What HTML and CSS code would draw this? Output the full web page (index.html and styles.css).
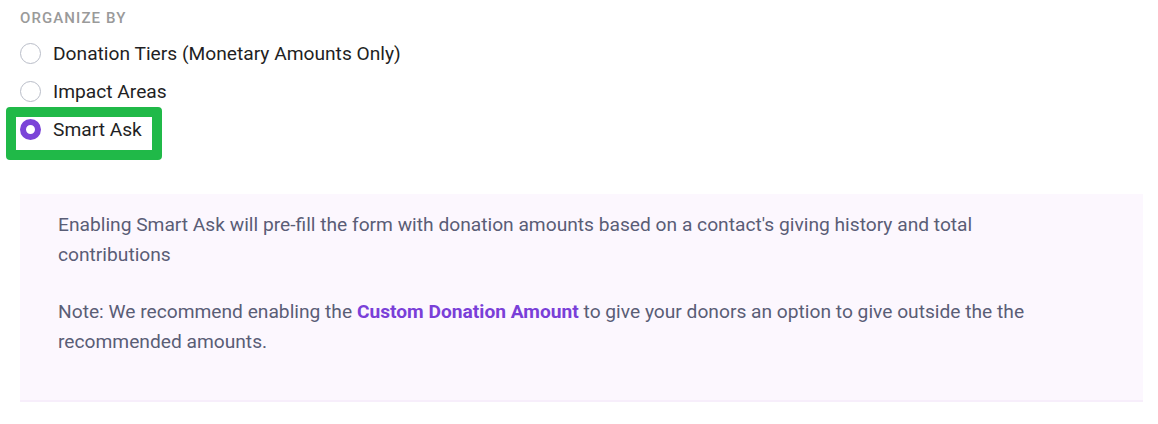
FILE: index.html
```html
<!DOCTYPE html>
<html>
<head>
<meta charset="utf-8">
<link rel="stylesheet" href="styles.css">
</head>
<body>
<div class="section">
  <div class="heading">ORGANIZE BY</div>
  <div class="options">
    <label class="option"><span class="radio"></span><span class="label-text">Donation Tiers (Monetary Amounts Only)</span></label>
    <label class="option"><span class="radio"></span><span class="label-text">Impact Areas</span></label>
    <label class="option selected"><span class="highlight"></span><span class="radio checked"></span><span class="label-text">Smart Ask</span></label>
  </div>
  <div class="panel">
    <p>Enabling Smart Ask will pre-fill the form with donation amounts based on a contact's giving history and total contributions</p>
    <p>Note: We recommend enabling the <a class="link">Custom Donation Amount</a> to give your donors an option to give outside the the recommended amounts.</p>
  </div>
</div>
</body>
</html>
```
FILE: styles.css
```css
html, body {
  margin: 0;
  padding: 0;
  background: #ffffff;
}
body {
  font-family: Roboto, "Liberation Sans", sans-serif;
}
.section {
  padding-left: 20px;
  padding-right: 15px;
}
.heading {
  padding-top: 8px;
  line-height: 20px;
  font-size: 15px;
  font-weight: 500;
  letter-spacing: 1.1px;
  color: #9a9a9a;
}
.options {
  display: flex;
  flex-direction: column;
  margin-top: 6px;
}
.option {
  position: relative;
  display: flex;
  align-items: center;
  height: 38px;
  font-size: 19.2px;
  color: #1f1f24;
}
.radio {
  width: 21px;
  height: 21px;
  box-sizing: border-box;
  border: 1.5px solid #b9bdc8;
  border-radius: 50%;
  margin-right: 12px;
  flex: none;
  background: #fff;
}
.radio.checked {
  border: 6.5px solid #7b44d8;
  background: #fff;
}
.highlight {
  position: absolute;
  left: -14px;
  top: -3px;
  width: 156px;
  height: 53px;
  box-sizing: border-box;
  border: 10px solid #20b948;
  border-radius: 4px;
}
.panel {
  margin-top: 46px;
  width: 1123px;
  box-sizing: border-box;
  background: #fcf7fe;
  border-bottom: 2px solid #f7eefb;
  padding: 16px 80px 43px 38px;
  color: #5a5d76;
  font-size: 19.2px;
  line-height: 30px;
}
.panel p {
  margin: 0;
}
.panel p + p {
  margin-top: 27px;
}
.link {
  color: #7a3fd8;
  font-weight: 700;
}
```
